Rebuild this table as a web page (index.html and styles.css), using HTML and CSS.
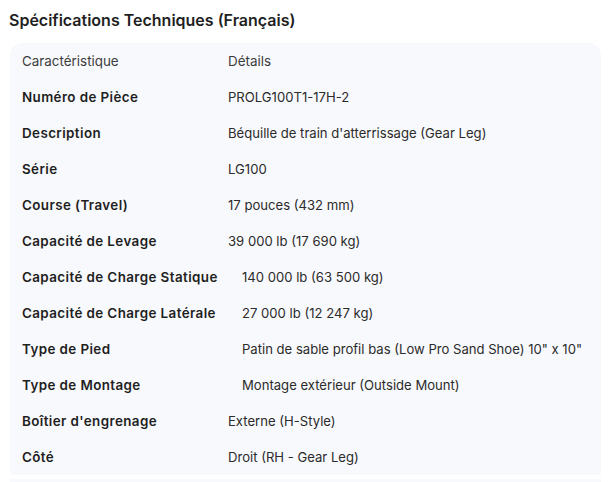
FILE: index.html
```html
<!DOCTYPE html>
<html lang="fr">
<head>
<meta charset="utf-8">
<link rel="stylesheet" href="styles.css">
</head>
<body>
<h2 class="title">Spécifications Techniques (Français)</h2>
<div class="card">
  <table class="specs">
    <thead>
      <tr><th>Caractéristique</th><th>Détails</th></tr>
    </thead>
    <tbody>
      <tr><td class="key">Numéro de Pièce</td><td>PROLG100T1-17H-2</td></tr>
      <tr><td class="key">Description</td><td>Béquille de train d'atterrissage (Gear Leg)</td></tr>
      <tr><td class="key">Série</td><td>LG100</td></tr>
      <tr><td class="key">Course (Travel)</td><td>17 pouces (432 mm)</td></tr>
      <tr><td class="key">Capacité de Levage</td><td>39 000 lb (17 690 kg)</td></tr>
      <tr class="wide"><td class="key">Capacité de Charge Statique</td><td>140 000 lb (63 500 kg)</td></tr>
      <tr class="wide"><td class="key">Capacité de Charge Latérale</td><td>27 000 lb (12 247 kg)</td></tr>
      <tr class="wide"><td class="key">Type de Pied</td><td>Patin de sable profil bas (Low Pro Sand Shoe) 10" x 10"</td></tr>
      <tr class="wide"><td class="key">Type de Montage</td><td>Montage extérieur (Outside Mount)</td></tr>
      <tr><td class="key">Boîtier d'engrenage</td><td>Externe (H-Style)</td></tr>
      <tr><td class="key">Côté</td><td>Droit (RH - Gear Leg)</td></tr>
    </tbody>
  </table>
</div>
<div class="next"></div>
</body>
</html>
```
FILE: styles.css
```css
html, body {
  margin: 0;
  padding: 0;
  background: #ffffff;
}
body {
  font-family: Inter, "Noto Sans", sans-serif;
  color: #1f1f1f;
  padding: 0 9px 0 10px;
  overflow: hidden;
}
.title {
  margin: 0 0 0 -1px;
  padding: 10px 0 0 0;
  height: 43px;
  box-sizing: border-box;
  font-size: 16px;
  font-weight: 600;
  line-height: 20px;
  color: #1f1f1f;
}
.card {
  background: #f8f9fc;
  border-radius: 12px 12px 0 0;
  width: 591px;
}
.specs {
  border-collapse: collapse;
  table-layout: fixed;
  width: 100%;
  font-size: 13.4px;
}
.specs th, .specs td {
  height: 36px;
  padding: 0 0 0 12px;
  text-align: left;
  vertical-align: middle;
  white-space: nowrap;
  overflow: visible;
}
.specs th {
  font-weight: 400;
  color: #3c3c3c;
}
.specs th:first-child {
  width: 194px;
}
.specs td.key {
  font-weight: 600;
  letter-spacing: 0.4px;
}
.specs td {
  color: #1f1f1f;
}
.specs td:last-child {
  color: #2b2b2b;
  font-size: 13.1px;
}
.specs tr.wide td:last-child {
  padding-left: 26px;
}
.next {
  margin-top: 4px;
  height: 10px;
  width: 591px;
  background: #f8f9fc;
}
```
